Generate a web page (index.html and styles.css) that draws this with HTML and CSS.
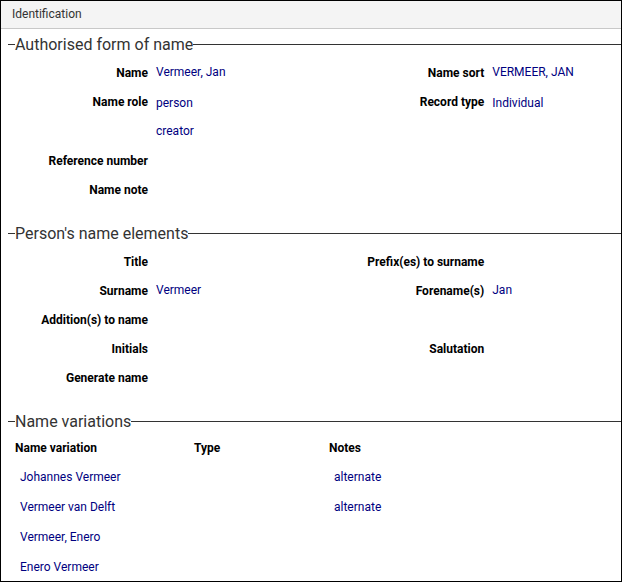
FILE: index.html
```
<!DOCTYPE html>
<html lang="en">
  <head>
    <meta charset="UTF-8" />
    <meta name="viewport" content="width=device-width, initial-scale=1.0" />
    <title>Identification</title>
    <link rel="stylesheet" href="styles.css">
  </head>
  <body>
    <div class="panel">
      <h1 class="panel-header">Identification</h1>
      <div class="panel-body">
        <section class="group">
          <h2 class="group-title">Authorised form of name</h2>
          <dl class="fields">
            <dt class="left">Name</dt>
            <dd>Vermeer, Jan</dd>
            <dt>Name sort</dt>
            <dd>VERMEER, JAN</dd>
            <dt class="left">Name role</dt>
            <dd>
              <ul class="values">
                <li>person</li>
                <li>creator</li>
              </ul>
            </dd>
            <dt>Record type</dt>
            <dd>
              <ul class="values">
                <li>Individual</li>
              </ul>
            </dd>
            <dt class="left">Reference number</dt>
            <dd></dd>
            <dt class="left">Name note</dt>
            <dd></dd>
          </dl>
        </section>

        <section class="group">
          <h2 class="group-title">Person's name elements</h2>
          <dl class="fields">
            <dt class="left">Title</dt>
            <dd></dd>
            <dt>Prefix(es) to surname</dt>
            <dd></dd>
            <dt class="left">Surname</dt>
            <dd>Vermeer</dd>
            <dt>Forename(s)</dt>
            <dd>Jan</dd>
            <dt class="left">Addition(s) to name</dt>
            <dd></dd>
            <dt class="left">Initials</dt>
            <dd></dd>
            <dt>Salutation</dt>
            <dd></dd>
            <dt class="left">Generate name</dt>
            <dd></dd>
          </dl>
        </section>

        <section class="group">
          <h2 class="group-title">Name variations</h2>
          <table class="variations">
            <thead>
              <tr>
                <th class="col-name">Name variation</th>
                <th class="col-type">Type</th>
                <th>Notes</th>
              </tr>
            </thead>
            <tbody>
              <tr>
                <td>Johannes Vermeer</td>
                <td></td>
                <td>alternate</td>
              </tr>
              <tr>
                <td>Vermeer van Delft</td>
                <td></td>
                <td>alternate</td>
              </tr>
              <tr>
                <td>Vermeer, Enero</td>
                <td></td>
                <td></td>
              </tr>
              <tr>
                <td>Enero Vermeer</td>
                <td></td>
                <td></td>
              </tr>
            </tbody>
          </table>
        </section>
      </div>
    </div>
  </body>
</html>
```
FILE: styles.css
```
* {
  box-sizing: border-box;
}
body {
  margin: 0;
  font-family: Roboto, Arial, sans-serif;
  font-size: 12px;
  color: #000;
  background: #fff;
}
.panel {
  min-height: 100vh;
  border: 1px solid #000;
}
.panel-header {
  margin: 0;
  padding: 0 11px;
  font-size: 12px;
  font-weight: 400;
  line-height: 27px;
  color: #333;
  background: #f4f4f4;
  border-bottom: 1px solid #c8c8c8;
}
.panel-body {
  padding: 1px 0 0 7px;
}
.group + .group {
  margin-top: 14px;
}
.group-title {
  display: flex;
  align-items: center;
  margin: 0;
  font-size: 16px;
  font-weight: 400;
  line-height: 29px;
  color: #333;
}
/* rule on both sides of the title */
.group-title::before,
.group-title::after {
  content: "";
  width: 7px;
  height: 1px;
  background: #333;
}
.group-title::after {
  flex: 1;
}
.fields {
  display: grid;
  grid-template-columns: 140px 7fr 140px 5fr;
  column-gap: 8px;
  margin: 0;
}
.fields dt {
  font-weight: 700;
  line-height: 29px;
  text-align: right;
}
.fields .left {
  grid-column: 1;
}
.fields dd {
  margin: 0;
  line-height: 27px;
  color: #000080;
}
.values {
  margin: 0;
  padding: 1px 0 2px;
  list-style: none;
  line-height: 28px;
}
.variations {
  width: 100%;
  padding-left: 7px;
  border-spacing: 0;
  table-layout: fixed;
}
.variations th,
.variations td {
  padding: 0;
  line-height: 28px;
  text-align: left;
}
.variations th {
  height: 27px;
  line-height: 25px;
  vertical-align: top;
}
.variations td {
  padding-left: 5px;
  color: #000080;
}
.variations tr + tr td {
  padding-top: 2px;
}
.col-name {
  width: 179px;
}
.col-type {
  width: 135px;
}
```
